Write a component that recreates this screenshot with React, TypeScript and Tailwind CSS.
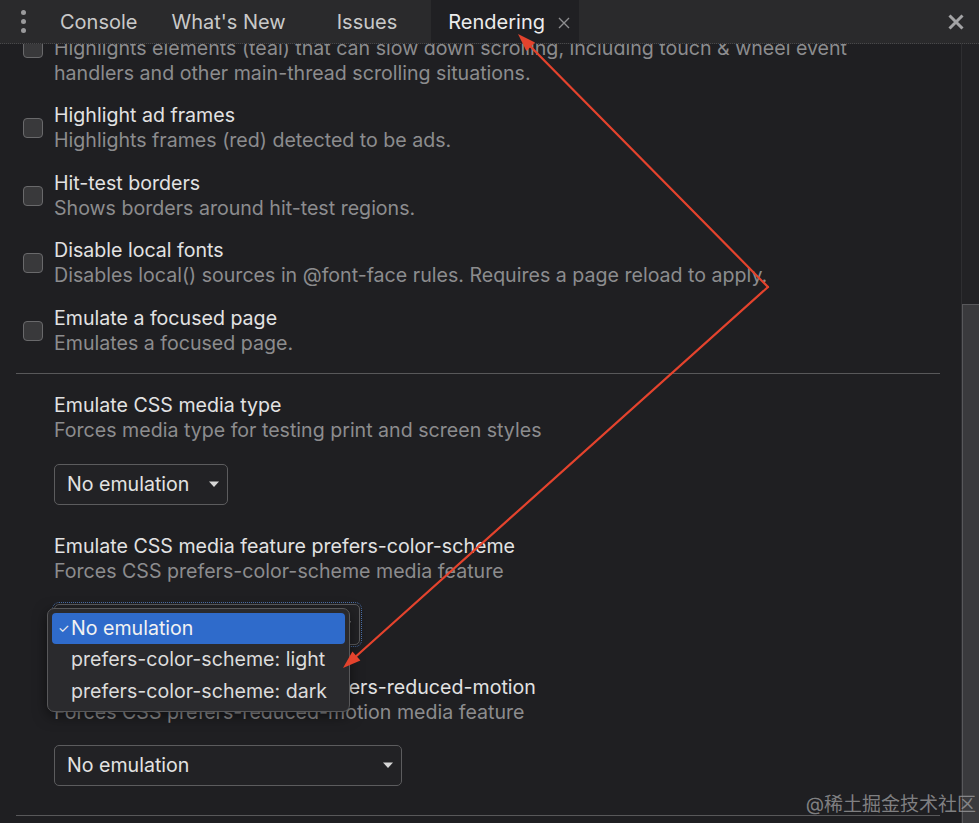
import React from 'react';

const CHECK_ROWS = [
  {
    title: '',
    desc: [
      'Highlights elements (teal) that can slow down scrolling, including touch & wheel event',
      'handlers and other main-thread scrolling situations.',
    ],
  },
  { title: 'Highlight ad frames', desc: ['Highlights frames (red) detected to be ads.'] },
  { title: 'Hit-test borders', desc: ['Shows borders around hit-test regions.'] },
  {
    title: 'Disable local fonts',
    desc: ['Disables local() sources in @font-face rules. Requires a page reload to apply.'],
  },
  { title: 'Emulate a focused page', desc: ['Emulates a focused page.'] },
];

const Caret = () => (
  <svg width="12" height="7" viewBox="0 0 12 7" className="shrink-0">
    <path d="M1 0.5 L11 0.5 L6 6 Z" fill="#d6d6d6" />
  </svg>
);

const Select: React.FC<{ width: string; focused?: boolean }> = ({ width, focused }) => (
  <div
    className={`${width} h-[41px] flex items-center justify-between pl-[12px] pr-[7px] rounded-[5px] border border-[#5c5c5e] bg-[#222225] text-[#e2e2e2] ${
      focused ? 'outline-1 outline-dotted outline-offset-1 outline-[#4a6fa8]' : ''
    }`}
  >
    <span>No emulation</span>
    <Caret />
  </div>
);

const Tabs = () => (
  <div className="relative z-10 h-[44px] shrink-0 flex items-center bg-[#2a2a2c] border-b border-dotted border-[#48484a] text-[20px]">
    <div className="w-[46px] h-full flex flex-col items-center justify-center gap-[4px]">
      <span className="w-[5px] h-[5px] rounded-full bg-[#9a9a9c]" />
      <span className="w-[5px] h-[5px] rounded-full bg-[#9a9a9c]" />
      <span className="w-[5px] h-[5px] rounded-full bg-[#9a9a9c]" />
    </div>
    <span className="ml-[14px] pt-[2px] text-[#c9c9c9]">Console</span>
    <span className="ml-[34px] pt-[2px] text-[#c9c9c9]">What's New</span>
    <span className="ml-[51px] pt-[2px] text-[#c9c9c9]">Issues</span>
    <div className="ml-[34px] h-full w-[148px] flex items-center bg-[#202023] pl-[17px] pt-[2px]">
      <span className="text-[#ececec]">Rendering</span>
      <svg width="14" height="14" viewBox="0 0 14 14" className="ml-[12px]">
        <path d="M2 2 L12 12 M12 2 L2 12" stroke="#8e8e90" strokeWidth="1.4" />
      </svg>
    </div>
    <div className="flex-1" />
    <svg width="18" height="18" viewBox="0 0 18 18" className="mr-[14px]">
      <path d="M2.5 2.5 L15.5 15.5 M15.5 2.5 L2.5 15.5" stroke="#a4a4a6" strokeWidth="3" />
    </svg>
  </div>
);

const Arrows = () => (
  <svg className="absolute inset-0 pointer-events-none z-30" width="979" height="823" viewBox="0 0 979 823">
    <g stroke="#e4432d" strokeWidth="2.2" fill="none" strokeLinecap="round">
      <path d="M768 287 L530.7 46.8" />
      <path d="M768 287 L356.4 656" />
    </g>
    <path d="M518 34 L535 42.6 L526.4 51 Z" fill="#e4432d" />
    <path d="M343 668 L360.4 660.5 L352.4 651.5 Z" fill="#e4432d" />
  </svg>
);

export default function App() {
  return (
    <div
      className="relative w-[979px] h-[823px] overflow-hidden bg-[#1f1f22] text-[19.6px] leading-[25px] flex flex-col"
      style={{ fontFamily: 'Inter, "Liberation Sans", "Noto Sans CJK SC", sans-serif' }}
    >
      <Tabs />
      <div className="flex-1 flex min-h-0">
        <div className="flex-1 overflow-hidden">
          <div className="mt-[-33.5px] flex flex-col gap-[17.5px]">
            {CHECK_ROWS.map((row, i) => (
              <div key={i} className="flex items-center">
                <div className="ml-[23px] w-[20px] h-[20px] rounded-[4px] border border-[#69696b] bg-[#39393b]" />
                <div className="ml-[11px]">
                  <div className="h-[25px] text-[#e2e2e2]">{row.title}</div>
                  {row.desc.map((line) => (
                    <div key={line} className="text-[#8c8c8e]">
                      {line}
                    </div>
                  ))}
                </div>
              </div>
            ))}
          </div>

          <div className="mt-[17.5px] ml-[16px] mr-[21px] border-t border-[#58585a]" />

          <div className="pl-[54px] pt-[19px]">
            <div className="text-[#e2e2e2]">Emulate CSS media type</div>
            <div className="text-[#8c8c8e]">Forces media type for testing print and screen styles</div>
            <div className="mt-[20.5px]">
              <Select width="w-[174px]" />
            </div>

            <div className="mt-[29.5px] text-[#e2e2e2]">Emulate CSS media feature prefers-color-scheme</div>
            <div className="text-[#8c8c8e]">Forces CSS prefers-color-scheme media feature</div>
            <div className="relative mt-[19.5px]">
              <Select width="w-[306px]" focused />
              <div className="absolute left-[-7px] top-[4px] z-20 w-[303px] h-[104px] rounded-[7px] border border-[#58585a] bg-[#2a2a2d] shadow-[0_4px_14px_rgba(0,0,0,0.5)] p-[4px] flex flex-col">
                <div className="h-[31px] flex items-center rounded-[4px] bg-[#2f6bcb] text-[#f2f2f2]">
                  <span className="w-[19px] pl-[6px] text-[13px] leading-none">✓</span>
                  <span>No emulation</span>
                </div>
                <div className="h-[32px] flex items-center pl-[19px] text-[#dcdcdc]">prefers-color-scheme: light</div>
                <div className="h-[31px] flex items-center pl-[19px] text-[#dcdcdc]">prefers-color-scheme: dark</div>
              </div>
            </div>

            <div className="mt-[30px] text-[#e2e2e2]">Emulate CSS media feature prefers-reduced-motion</div>
            <div className="text-[#8c8c8e]">Forces CSS prefers-reduced-motion media feature</div>
            <div className="mt-[20.5px]">
              <Select width="w-[348px]" />
            </div>
          </div>

          <div className="mt-[29px] ml-[16px] mr-[21px] border-t border-[#58585a]" />
        </div>

        <div className="w-[18px] shrink-0 flex flex-col border-l border-[#2e2e31] bg-[#222225]">
          <div className="h-[260px]" />
          <div className="flex-1 border-l border-t border-[#58585b] bg-[#3a3a3d]" />
        </div>
      </div>

      <div className="absolute right-[3px] bottom-[6px] z-30 text-[19px] leading-[24px] text-[#9a9a9c]/80">
        @稀土掘金技术社区
      </div>
      <Arrows />
    </div>
  );
}
